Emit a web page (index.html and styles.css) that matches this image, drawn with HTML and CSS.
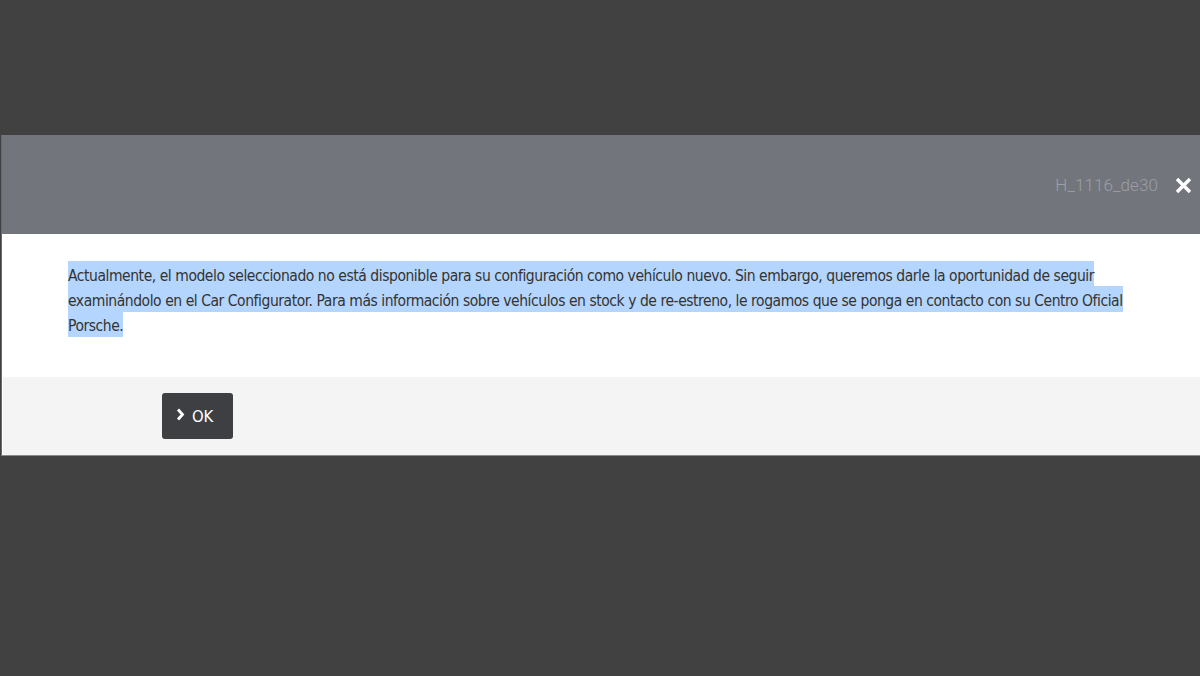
FILE: index.html
```html
<!DOCTYPE html>
<html lang="es">
<head>
<meta charset="utf-8">
<title>Porsche Car Configurator</title>
<link rel="stylesheet" href="styles.css">
</head>
<body>
<div class="page">
  <div class="modal">
    <div class="modal-head">
      <span class="code">H_1116_de30</span>
      <svg class="close" width="17" height="17" viewBox="0 0 17 17" aria-label="Cerrar">
        <path d="M2 2 L15 15 M15 2 L2 15" stroke="#ffffff" stroke-width="3.4" stroke-linecap="butt" fill="none"/>
      </svg>
    </div>
    <div class="modal-body">
      <p class="msg"><span class="sel">Actualmente, el modelo seleccionado no está disponible para su configuración como vehículo nuevo. Sin embargo, queremos darle la oportunidad de seguir examinándolo en el Car Configurator. Para más información sobre vehículos en stock y de re-estreno, le rogamos que se ponga en contacto con su Centro Oficial Porsche.</span></p>
    </div>
    <div class="modal-foot">
      <button class="ok"><svg class="chev" width="9" height="13" viewBox="0 0 9 13"><path d="M2 1.5 L6.5 6.5 L2 11.5" stroke="#ffffff" stroke-width="2.8" fill="none"/></svg><span>OK</span></button>
    </div>
  </div>
</div>
</body>
</html>
```

FILE: styles.css
```css
html, body {
  margin: 0;
  padding: 0;
  height: 100%;
}
body {
  background: #414141;
  font-family: "DejaVu Sans Condensed", "Liberation Sans", sans-serif;
}
.page {
  padding-top: 135px;
  padding-left: 1px;
}
.modal {
  border-left: 1px solid #6a6a6a;
  border-bottom: 1px solid #8a8a8a;
}
.modal-head {
  height: 99px;
  background: #72757c;
  display: flex;
  align-items: center;
  justify-content: flex-end;
  padding-right: 8px;
  gap: 17px;
}
.code {
  font-family: Roboto, "Liberation Sans", sans-serif;
  font-weight: 300;
  font-size: 17px;
  color: #9c9fa4;
  letter-spacing: 0.1px;
}
.close {
  display: block;
  margin-top: 1px;
}
.modal-body {
  background: #ffffff;
  padding: 30px 66px 38px 66px;
}
.msg {
  margin: 0;
  font-size: 15.5px;
  letter-spacing: -0.45px;
  line-height: 25px;
  color: #333333;
}
.sel {
  background: #b4d5fd;
  padding: 6px 0 2px 0;
}
.modal-foot {
  background: #f4f4f4;
  border-left: 1px solid #ffffff;
  padding: 16px 0 16px 159px;
}
.ok {
  display: flex;
  align-items: center;
  gap: 7px;
  width: 71px;
  height: 46px;
  padding: 0 0 0 14px;
  background: #3d3f43;
  border: none;
  border-radius: 3px;
  color: #ffffff;
  font-family: "DejaVu Sans Condensed", sans-serif;
  font-size: 16.5px;
  letter-spacing: -0.3px;
}
.chev {
  display: block;
  margin-top: -3px;
}
```
